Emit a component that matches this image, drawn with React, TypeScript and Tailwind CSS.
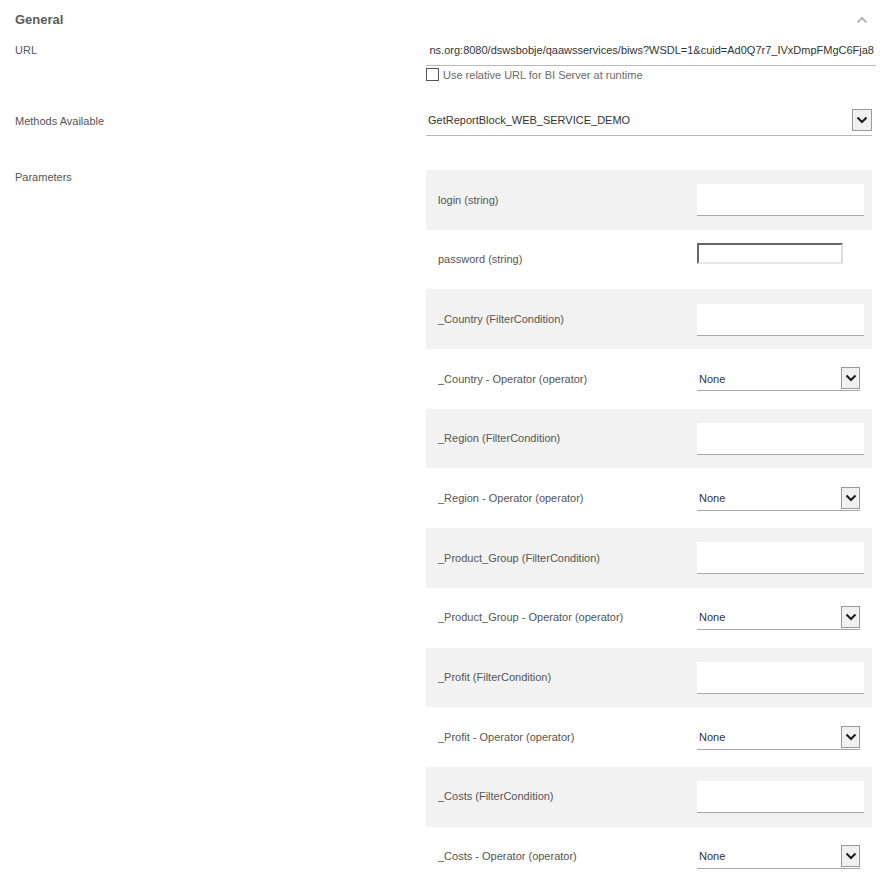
import React from "react";

type Param = { label: string; kind: "text" | "password" | "select" };

const params: Param[] = [
  { label: "login (string)", kind: "text" },
  { label: "password (string)", kind: "password" },
  { label: "_Country (FilterCondition)", kind: "text" },
  { label: "_Country - Operator (operator)", kind: "select" },
  { label: "_Region (FilterCondition)", kind: "text" },
  { label: "_Region - Operator (operator)", kind: "select" },
  { label: "_Product_Group (FilterCondition)", kind: "text" },
  { label: "_Product_Group - Operator (operator)", kind: "select" },
  { label: "_Profit (FilterCondition)", kind: "text" },
  { label: "_Profit - Operator (operator)", kind: "select" },
  { label: "_Costs (FilterCondition)", kind: "text" },
  { label: "_Costs - Operator (operator)", kind: "select" },
];

function ArrowBox({ className }: { className?: string }) {
  return (
    <div
      className={
        "flex items-center justify-center border border-[#9a9a9a] bg-[#f0f0f0] " +
        (className ?? "")
      }
    >
      <svg width="12" height="8" viewBox="0 0 12 8">
        <path d="M1.5 1.5 L6 6 L10.5 1.5" fill="none" stroke="#1a1a1a" strokeWidth="2" />
      </svg>
    </div>
  );
}

export default function App() {
  return (
    <div
      className="w-[884px] h-[886px] overflow-hidden bg-white text-[11px] text-[#555]"
      style={{ fontFamily: '"Liberation Sans", Arial, sans-serif' }}
    >
      {/* Header */}
      <div className="h-[36px] flex items-center justify-between pl-[15px] pr-[16px] pt-[2px]">
        <span className="text-[13px] font-bold text-[#5b5b5b] leading-none">General</span>
        <svg width="12" height="8" viewBox="0 0 12 8" className="mt-[2px]">
          <path d="M1.5 6.5 L6 2 L10.5 6.5" fill="none" stroke="#a8a8a8" strokeWidth="1.6" />
        </svg>
      </div>

      {/* URL */}
      <div className="flex pl-[15px]">
        <div className="w-[411px] pt-[7px] leading-[14px]">URL</div>
        <div className="flex flex-col">
          <div className="w-[450px] h-[30px] border-b border-[#b8b8b8] flex items-center justify-end overflow-hidden whitespace-nowrap text-[#333] pr-[2px]">
            ns.org:8080/dswsbobje/qaawsservices/biws?WSDL=1&amp;cuid=Ad0Q7r7_IVxDmpFMgC6Fja8
          </div>
          <div className="flex items-center mt-[1px] h-[14px]">
            <div className="w-[13px] h-[13px] border border-[#555] bg-white" />
            <span className="ml-[4px] text-[#6a6a6a] leading-none mt-[2px]">Use relative URL for BI Server at runtime</span>
          </div>
        </div>
      </div>

      {/* Methods */}
      <div className="flex pl-[15px] mt-[25px]">
        <div className="w-[411px] pt-[8px] leading-[14px]">Methods Available</div>
        <div className="w-[446px] h-[30px] border-b border-[#b8b8b8] flex items-center justify-between text-[#333]">
          <span className="pl-[2px]">GetReportBlock_WEB_SERVICE_DEMO</span>
          <ArrowBox className="w-[20px] h-[22px] mb-[2px]" />
        </div>
      </div>

      {/* Parameters */}
      <div className="flex pl-[15px] mt-[34px]">
        <div className="w-[411px] leading-[14px]">Parameters</div>
        <div className="w-[446px] flex flex-col">
          {params.map((p, i) => (
            <div
              key={p.label}
              className={
                "h-[59.7px] flex items-center " + (i % 2 === 0 ? "bg-[#f2f2f2]" : "bg-white")
              }
            >
              <div className="w-[271px] pl-[12px] text-[#555]">{p.label}</div>
              {p.kind === "text" && (
                <div className="w-[167px] h-[32px] bg-white border-b border-[#a8a8a8] mt-[1px]" />
              )}
              {p.kind === "password" && (
                <div className="w-[146px] h-[21px] bg-white border-2 border-t-[#666] border-l-[#666] border-r-[#dcdcdc] border-b-[#e8e8e8] -mt-[12px]" />
              )}
              {p.kind === "select" && (
                <div className="w-[163px] h-[24px] border-b border-[#a8a8a8] flex items-center justify-between text-[#333] mt-[1px]">
                  <span className="pl-[2px]">None</span>
                  <ArrowBox className="w-[19px] h-[22px] mb-[1px]" />
                </div>
              )}
            </div>
          ))}
        </div>
      </div>
    </div>
  );
}
